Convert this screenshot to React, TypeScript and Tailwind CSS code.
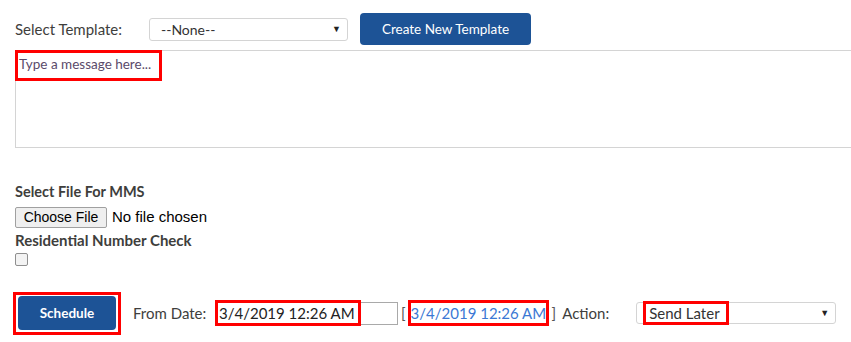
import React from "react";

export default function App() {
  return (
    <div
      className="w-[851px] h-[342px] overflow-hidden bg-white text-[#3e3e3c] relative"
      style={{ fontFamily: "Lato, 'Open Sans', sans-serif" }}
    >
      {/* Row 1 */}
      <div className="flex items-center pl-[15px] pt-[13px] h-[32px] box-content">
        <span className="text-[15px] w-[134px]">Select Template:</span>
        <div className="w-[199px] h-[23px] border border-[#d4d4d4] rounded-[3px] flex items-center justify-between pl-[11px] pr-[6px]">
          <span className="text-[14px] text-[#333]">--None--</span>
          <span className="text-[9px] text-[#222]">▼</span>
        </div>
        <button className="ml-[12px] w-[171px] h-[32px] rounded-[4px] bg-[#1d5396] text-white text-[13.5px]">
          Create New Template
        </button>
      </div>

      {/* Textarea */}
      <div className="mt-[5px] ml-[15px] w-[850px] h-[98px] border border-[#d4d4d4] relative">
        <div className="absolute left-[-1px] top-[-1px] w-[147px] h-[31px] border-[3px] border-[#ff0000]"></div>
        <span className="absolute left-[3px] top-[3px] text-[13.5px] text-[#5a4a6a] whitespace-nowrap">Type a message here...</span>
      </div>

      {/* MMS section */}
      <div className="pl-[15px] mt-[35px]">
        <div className="text-[14.5px] font-bold leading-[18px]">Select File For MMS</div>
        <div className="flex items-center mt-[5px]" style={{ fontFamily: "'Liberation Sans', Arial, sans-serif" }}>
          <button className="w-[92px] h-[21px] border border-[#a0a0a0] rounded-[2px] bg-[#efefef] text-[14px] text-black leading-none">
            Choose File
          </button>
          <span className="ml-[5px] text-[15px] text-black">No file chosen</span>
        </div>
        <div className="text-[15px] font-bold leading-[18px] mt-[2px]">Residential Number Check</div>
        <div className="mt-[4px] w-[13px] h-[13px] border border-[#8f8f8f] rounded-[2px] bg-[#f3f3f3]"></div>
      </div>

      {/* Bottom row */}
      <div className="flex items-center mt-[26px] pl-[13px]">
        <div className="w-[108px] h-[43px] border-[3px] border-[#ff0000] flex items-center justify-center">
          <button className="w-[98px] h-[34px] rounded-[4px] bg-[#1d5396] text-white text-[13.5px] font-bold">
            Schedule
          </button>
        </div>
        <span className="ml-[12px] text-[15px] w-[82px]">From Date:</span>
        <div className="flex items-center">
          <div className="w-[146px] h-[26px] border-[3px] border-[#ff0000] flex items-center pl-[1px] text-[15px] text-[#222] whitespace-nowrap">
            3/4/2019 12:26 AM
          </div>
          <div className="w-[37px] h-[23px] border border-[#a9a9a9] border-l-0"></div>
        </div>
        <span className="ml-[3px] text-[15px] text-[#555]">[</span>
        <div className="ml-[2px] w-[141px] h-[26px] border-[3px] border-[#ff0000] flex items-center text-[15px] text-[#3b78d4] whitespace-nowrap overflow-visible">
          3/4/2019 12:26 AM
        </div>
        <span className="ml-[3px] text-[15px] text-[#555]">]</span>
        <span className="ml-[6px] text-[15px] w-[74px]">Action:</span>
        <div className="w-[200px] h-[22px] border border-[#d4d4d4] rounded-[3px] relative flex items-center justify-end pr-[6px]">
          <div className="absolute left-[6px] top-[-2px] w-[86px] h-[24px] border-[3px] border-[#ff0000] flex items-center pl-[3px] text-[15px] text-[#333] whitespace-nowrap">
            Send Later
          </div>
          <span className="text-[9px] text-[#222]">▼</span>
        </div>
      </div>
    </div>
  );
}
